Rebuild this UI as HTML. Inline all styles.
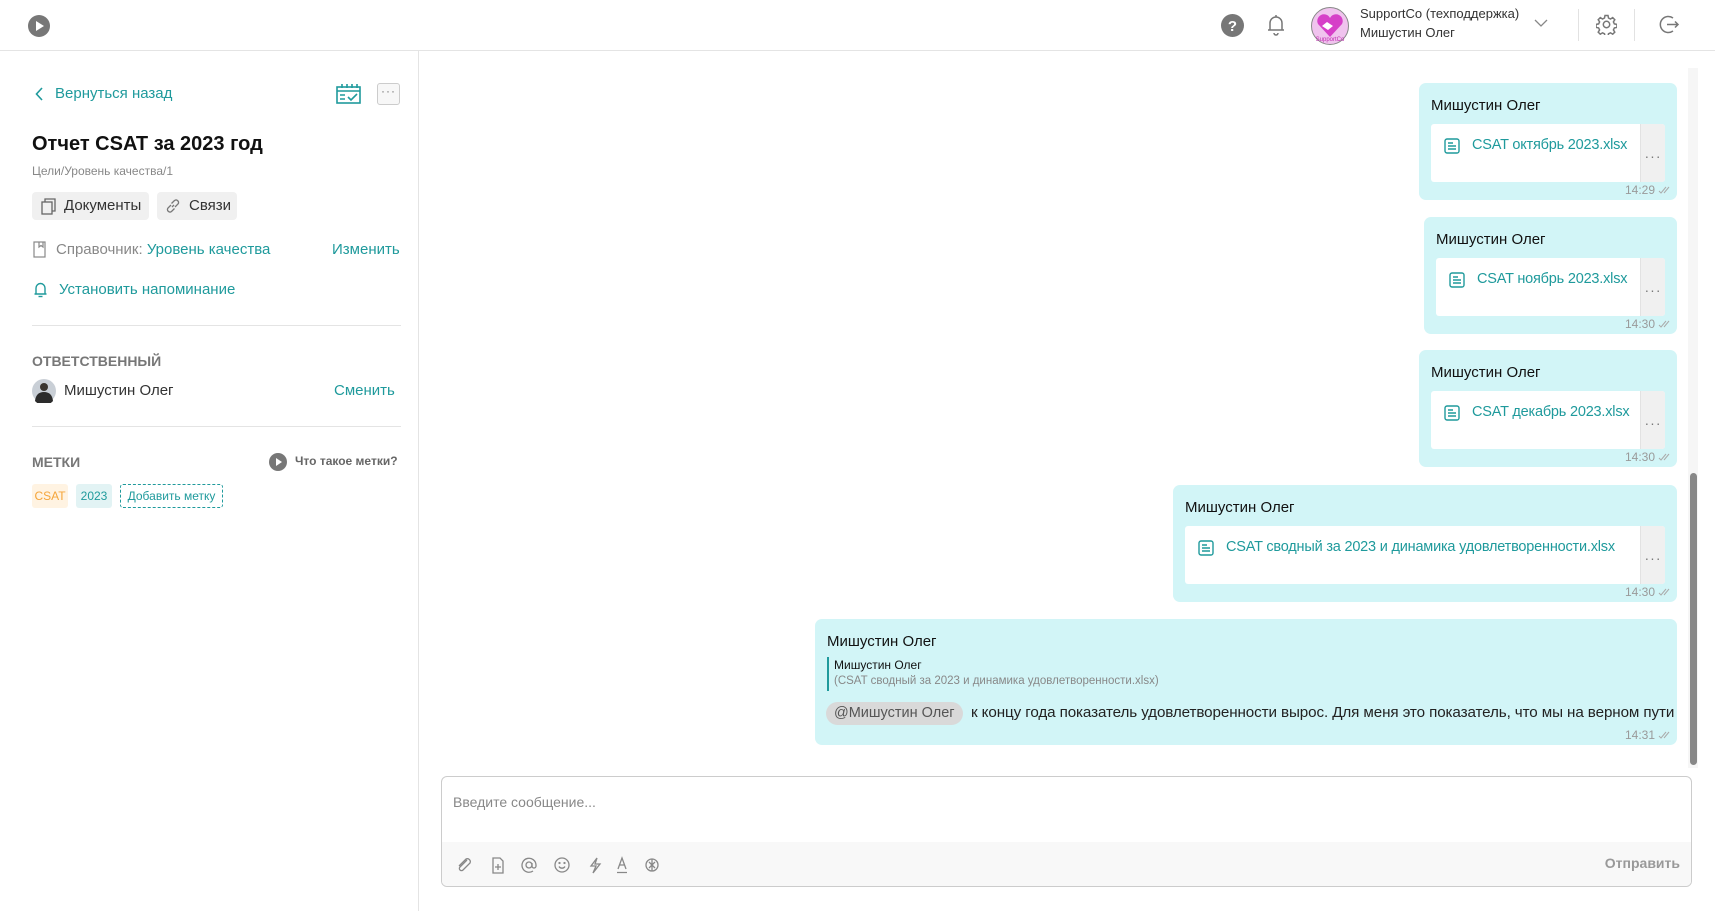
<!DOCTYPE html>
<html><head><meta charset="utf-8">
<style>
*{box-sizing:border-box;margin:0;padding:0}
body{width:1715px;height:911px;overflow:hidden;background:#fff;font-family:"Liberation Sans","Noto Sans CJK SC",sans-serif;color:#222;position:relative}
.a{position:absolute;white-space:nowrap}
.teal{color:#1f9a9c}
.bub{position:absolute;background:#d2f5f7;border-radius:7px}
.bub .nm{position:absolute;left:12px;top:14px;font-size:15px;color:#111}
.card{position:absolute;left:12px;right:12px;top:41px;height:58px;background:#fff;border-radius:3px;overflow:hidden}
.card .dots{position:absolute;right:0;top:0;bottom:0;width:25px;background:#f0f0f0;border-left:1px solid #e2e2e2;color:#777;font-size:14px;text-align:center;line-height:64px;letter-spacing:1px}
.card .fn{position:absolute;left:41px;top:13px;font-size:14.5px;color:#1f9a9c;letter-spacing:-0.2px}
.card svg{position:absolute;left:13px;top:14px}
.tm{position:absolute;right:6px;bottom:3px;font-size:12px;color:#9a9a9a;display:flex;align-items:center;gap:3px}
</style></head><body>
<!-- header -->
<div class="a" style="left:0;top:0;width:1715px;height:51px;border-bottom:1px solid #e4e4e4"></div>
<svg class="a" style="left:28px;top:15px" width="22" height="22"><circle cx="11" cy="11" r="11" fill="#777"/><path d="M8 6 L16 11 L8 16Z" fill="#fff"/></svg>
<svg class="a" style="left:1221px;top:14px" width="23" height="23"><circle cx="11.5" cy="11.5" r="11.5" fill="#777"/><text x="11.5" y="17" font-size="15" font-weight="bold" fill="#fff" text-anchor="middle" font-family="Liberation Sans">?</text></svg>
<svg class="a" style="left:1266px;top:13px" width="20" height="24" fill="none" stroke="#777" stroke-width="1.5"><path d="M4 17 V10 a6 6 0 0 1 12 0 V17 H2 H18"/><path d="M8 20 a2 2 0 0 0 4 0"/><path d="M10 2V4"/></svg>
<svg class="a" style="left:1311px;top:7px" width="38" height="38"><circle cx="19" cy="19" r="18.5" fill="#f0c3ee" stroke="#888"/><path d="M19 30 L7 17 a6 6 0 0 1 12-6 a6 6 0 0 1 12 6Z" fill="#d63fc8"/><path d="M11 19 l5-4 l6 4 l-5 4Z" fill="#fff"/><text x="19" y="34" font-size="6" fill="#c02bb0" text-anchor="middle" font-family="Liberation Sans">SupportCo</text></svg>
<div class="a" style="left:1360px;top:6px;font-size:13px;color:#333">SupportCo (техподдержка)</div>
<div class="a" style="left:1360px;top:25px;font-size:13px;color:#333">Мишустин Олег</div>
<svg class="a" style="left:1534px;top:19px" width="14" height="9" fill="none" stroke="#888" stroke-width="1.3"><path d="M1 1 L7 7 L13 1"/></svg>
<div class="a" style="left:1578px;top:9px;width:1px;height:32px;background:#e2e2e2"></div>
<svg class="a" style="left:1596px;top:14px" width="21" height="21" fill="none" stroke="#777" stroke-width="1.5"><circle cx="10.5" cy="10.5" r="3.2"/><path d="M9 1.5h3l.5 2.5 2 1 2.2-1.4 2.1 2.1-1.4 2.2 1 2 2.5.5v3l-2.5.5-1 2 1.4 2.2-2.1 2.1-2.2-1.4-2 1-.5 2.5h-3l-.5-2.5-2-1-2.2 1.4-2.1-2.1 1.4-2.2-1-2-2.5-.5v-3l2.5-.5 1-2-1.4-2.2 2.1-2.1 2.2 1.4 2-1z"/></svg>
<div class="a" style="left:1634px;top:9px;width:1px;height:32px;background:#e2e2e2"></div>
<svg class="a" style="left:1658px;top:14px" width="22" height="21" fill="none" stroke="#777" stroke-width="1.5"><path d="M15 4 A8 8 0 1 0 15 17"/><path d="M9 10.5H20M17 7.5l3 3-3 3"/></svg>

<!-- left panel -->
<div class="a" style="left:418px;top:51px;width:1px;height:860px;background:#e4e4e4"></div>
<svg class="a" style="left:35px;top:87px" width="9" height="14" fill="none" stroke="#1f9a9c" stroke-width="1.6"><path d="M7 1 L1.5 7 L7 13"/></svg>
<div class="a teal" style="left:55px;top:85px;font-size:15px">Вернуться назад</div>
<svg class="a" style="left:336px;top:83px" width="25" height="21" fill="none" stroke="#1f9a9c" stroke-width="1.6"><rect x="1" y="4" width="23" height="16"/><path d="M1 8H24M6 1V5M11 1V5M16 1V5M21 1V5M4 12H9M4 16H9M12 14l3 3 6-6"/></svg>
<div class="a" style="left:377px;top:83px;width:23px;height:22px;border:1px solid #ccc;border-radius:3px;background:#f7f7f7;color:#777;font-size:12px;text-align:center;line-height:14px;letter-spacing:1px">···</div>
<div class="a" style="left:32px;top:133px;font-size:20px;font-weight:bold;color:#111">Отчет CSAT за 2023 год</div>
<div class="a" style="left:32px;top:164px;font-size:12px;color:#888">Цели/Уровень качества/1</div>
<div class="a" style="left:32px;top:192px;width:117px;height:28px;background:#f0f0f0;border-radius:4px"></div>
<svg class="a" style="left:41px;top:198px" width="15" height="17" fill="none" stroke="#666" stroke-width="1.3"><rect x="1" y="4" width="10" height="12"/><path d="M4 4V1H14V13H11"/></svg>
<div class="a" style="left:64px;top:197px;font-size:15px;color:#333">Документы</div>
<div class="a" style="left:157px;top:192px;width:80px;height:28px;background:#f0f0f0;border-radius:4px"></div>
<svg class="a" style="left:165px;top:198px" width="16" height="16" fill="none" stroke="#777" stroke-width="1.3"><path d="M7 9 L9 7"/><path d="M6 7 L3 10 a2.5 2.5 0 0 0 3.5 3.5 L9.5 10.5"/><path d="M10 9 L13 6 a2.5 2.5 0 0 0-3.5-3.5 L6.5 5.5"/></svg>
<div class="a" style="left:189px;top:197px;font-size:15px;color:#333">Связи</div>
<svg class="a" style="left:33px;top:241px" width="13" height="17" fill="none" stroke="#888" stroke-width="1.2"><rect x="1" y="1" width="11" height="15"/><path d="M6 1V6L8 4.5 10 6V1"/></svg>
<div class="a" style="left:56px;top:241px;font-size:15px;color:#888">Справочник: <span class="teal">Уровень качества</span></div>
<div class="a teal" style="left:332px;top:241px;font-size:15px">Изменить</div>
<svg class="a" style="left:33px;top:281px" width="15" height="18" fill="none" stroke="#1f9a9c" stroke-width="1.4"><path d="M3 13V7a4.5 4.5 0 0 1 9 0V13H1.5H13.5"/><path d="M5.5 15.5h4"/></svg>
<div class="a teal" style="left:59px;top:281px;font-size:15px">Установить напоминание</div>
<div class="a" style="left:32px;top:325px;width:369px;height:1px;background:#e4e4e4"></div>
<div class="a" style="left:32px;top:353px;font-size:14px;font-weight:bold;color:#777">ОТВЕТСТВЕННЫЙ</div>
<svg class="a" style="left:32px;top:379px" width="24" height="24"><circle cx="12" cy="12" r="12" fill="#c9cfd6"/><circle cx="12" cy="8" r="4" fill="#3a3530"/><path d="M3 22 Q4 13 12 13 Q20 13 21 22 A12 12 0 0 1 3 22Z" fill="#2c2c2c"/></svg>
<div class="a" style="left:64px;top:382px;font-size:15px;color:#333">Мишустин Олег</div>
<div class="a teal" style="left:334px;top:382px;font-size:15px">Сменить</div>
<div class="a" style="left:32px;top:426px;width:369px;height:1px;background:#e4e4e4"></div>
<div class="a" style="left:32px;top:454px;font-size:14px;font-weight:bold;color:#777">МЕТКИ</div>
<svg class="a" style="left:269px;top:453px" width="18" height="18"><circle cx="9" cy="9" r="9" fill="#777"/><path d="M7 5 L13 9 L7 13Z" fill="#fff"/></svg>
<div class="a" style="left:295px;top:454px;font-size:12px;color:#666;font-weight:bold">Что такое метки?</div>
<div class="a" style="left:32px;top:484px;width:36px;height:24px;background:#fff3e2;border-radius:3px;color:#f5a53a;font-size:12px;text-align:center;line-height:24px">CSAT</div>
<div class="a" style="left:76px;top:484px;width:36px;height:24px;background:#e2f3f4;border-radius:3px;color:#1f9a9c;font-size:12px;text-align:center;line-height:24px">2023</div>
<div class="a teal" style="left:120px;top:484px;width:103px;height:24px;border:1px dashed #1f9a9c;border-radius:3px;font-size:12px;text-align:center;line-height:22px">Добавить метку</div>

<!-- scroll -->
<div class="a" style="left:1688px;top:68px;width:10px;height:700px;background:#f6f6f6"></div>
<div class="a" style="left:1690px;top:473px;width:7px;height:292px;background:#888;border-radius:4px"></div>

<!-- bubbles -->
<div class="bub" style="left:1419px;top:83px;width:258px;height:117px"><div class="nm">Мишустин Олег</div><div class="card"><svg width="16" height="16" fill="none" stroke="#1f9a9c" stroke-width="1.4"><rect x="1" y="1" width="14" height="14" rx="2"/><path d="M4 5h5M4 8h8M4 11h8"/></svg><div class="fn">CSAT октябрь 2023.xlsx</div><div class="dots">···</div></div><div class="tm">14:29<svg width="13" height="8" fill="none" stroke="#aaa" stroke-width="1"><path d="M1 5l2 2 5-6M6 7l5-6"/></svg></div></div>
<div class="bub" style="left:1424px;top:217px;width:253px;height:117px"><div class="nm">Мишустин Олег</div><div class="card"><svg width="16" height="16" fill="none" stroke="#1f9a9c" stroke-width="1.4"><rect x="1" y="1" width="14" height="14" rx="2"/><path d="M4 5h5M4 8h8M4 11h8"/></svg><div class="fn">CSAT ноябрь 2023.xlsx</div><div class="dots">···</div></div><div class="tm">14:30<svg width="13" height="8" fill="none" stroke="#aaa" stroke-width="1"><path d="M1 5l2 2 5-6M6 7l5-6"/></svg></div></div>
<div class="bub" style="left:1419px;top:350px;width:258px;height:117px"><div class="nm">Мишустин Олег</div><div class="card"><svg width="16" height="16" fill="none" stroke="#1f9a9c" stroke-width="1.4"><rect x="1" y="1" width="14" height="14" rx="2"/><path d="M4 5h5M4 8h8M4 11h8"/></svg><div class="fn">CSAT декабрь 2023.xlsx</div><div class="dots">···</div></div><div class="tm">14:30<svg width="13" height="8" fill="none" stroke="#aaa" stroke-width="1"><path d="M1 5l2 2 5-6M6 7l5-6"/></svg></div></div>
<div class="bub" style="left:1173px;top:485px;width:504px;height:117px"><div class="nm">Мишустин Олег</div><div class="card"><svg width="16" height="16" fill="none" stroke="#1f9a9c" stroke-width="1.4"><rect x="1" y="1" width="14" height="14" rx="2"/><path d="M4 5h5M4 8h8M4 11h8"/></svg><div class="fn">CSAT сводный за 2023 и динамика удовлетворенности.xlsx</div><div class="dots">···</div></div><div class="tm">14:30<svg width="13" height="8" fill="none" stroke="#aaa" stroke-width="1"><path d="M1 5l2 2 5-6M6 7l5-6"/></svg></div></div>
<div class="bub" style="left:815px;top:619px;width:862px;height:126px">
 <div class="nm">Мишустин Олег</div>
 <div class="a" style="left:12px;top:38px;width:2px;height:34px;background:#1f9a9c"></div>
 <div class="a" style="left:19px;top:39px;font-size:12px;color:#111">Мишустин Олег</div>
 <div class="a" style="left:19px;top:56px;font-size:11.5px;color:#888">(CSAT сводный за 2023 и динамика удовлетворенности.xlsx)</div>
 <div class="a" style="left:11px;top:83px;height:23px;padding:0 8px;background:#d9d9d9;border-radius:12px;font-size:14.5px;color:#555;line-height:23px">@Мишустин Олег</div>
 <div class="a" style="left:156px;top:85px;font-size:15.2px;color:#222;letter-spacing:-0.1px">к концу года показатель удовлетворенности вырос. Для меня это показатель, что мы на верном пути</div>
 <div class="tm">14:31<svg width="13" height="8" fill="none" stroke="#aaa" stroke-width="1"><path d="M1 5l2 2 5-6M6 7l5-6"/></svg></div>
</div>

<!-- input -->
<div class="a" style="left:441px;top:776px;width:1251px;height:111px;border:1px solid #ccc;border-radius:6px;overflow:hidden">
 <div class="a" style="left:0;top:65px;width:100%;height:46px;background:#f8f8f8"></div>
 <div class="a" style="left:11px;top:17px;font-size:14px;color:#888">Введите сообщение...</div>
 <div class="a" style="right:11px;top:78px;font-size:14px;color:#999;font-weight:bold">Отправить</div>
</div>
<svg class="a" style="left:456px;top:855px" width="220" height="20" fill="none" stroke="#888" stroke-width="1.3">
 <path d="M11 5 L4 12 a2 2 0 0 0 3 3 L14 8 a3 3 0 0 0-4-4 L3 11"/>
 <path d="M37 3h7l3 3v12H37Z M42 9v6M39 12h6"/>
 <circle cx="73" cy="10" r="3"/><path d="M76 8v3a2 2 0 0 0 4 0v-1a7 7 0 1 0-3 6"/>
 <circle cx="106" cy="10" r="7"/><path d="M103 11.5a3.5 3.5 0 0 0 6 0"/><circle cx="103.5" cy="8" r=".5"/><circle cx="108.5" cy="8" r=".5"/>
 <path d="M141 3 L135 11 H140 L137 18 L144 9 H139Z"/>
 <path d="M162 14 L166 3 L170 14 M163.5 10H168.5 M161 17.5H171"/>
 <circle cx="196" cy="10" r="6"/><path d="M193 7l6 6M199 7l-6 6M196 4v12"/>
</svg>
</body></html>
